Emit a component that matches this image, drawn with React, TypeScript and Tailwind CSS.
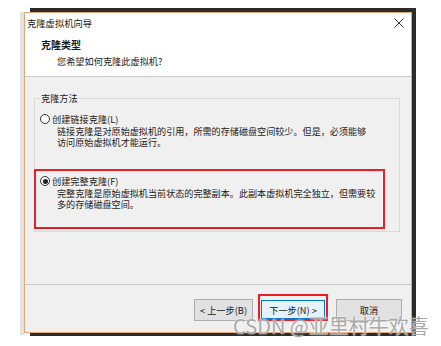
import React from 'react';

const font = "font-['Noto_Sans_CJK_SC','Noto_Sans',sans-serif]";

const Radio: React.FC<{ checked?: boolean }> = ({ checked }) => (
    <span className="w-[10px] h-[10px] rounded-full border border-[#333333] bg-white flex items-center justify-center shrink-0">
        {checked && <span className="w-[5px] h-[5px] rounded-full bg-[#222222]" />}
    </span>
);

export default function App() {
    return (
        <div className={`relative w-[441px] h-[346px] bg-white overflow-hidden text-[#1a1a1a] ${font}`}>
            {/* desktop shadow behind the window */}
            <div className="absolute left-[30px] top-[8px] w-[386px] h-[328px] bg-[#2b2b2b]" />
            <div className="absolute left-[20px] top-[12px] w-[4px] h-[323px] bg-[#e2e2e2]" />

            {/* dialog */}
            <div className="absolute left-[24px] top-[12px] w-[388px] h-[321px] border border-[#e6a574] bg-[#f0f0f0] flex flex-col">
                {/* header */}
                <div className="bg-white h-[64px] border-b border-[#c9c9c9] flex flex-col">
                    <div className="h-[19px] flex items-center justify-between pl-[2px] pr-[6px]">
                        <span className="text-[9.3px] leading-[12px]">克隆虚拟机向导</span>
                        <svg width="10" height="10" viewBox="0 0 10 10" className="mr-[1px]">
                            <path d="M0.5 0.5 L9.5 9.5 M9.5 0.5 L0.5 9.5" stroke="#333" strokeWidth="1" />
                        </svg>
                    </div>
                    <div className="mt-[7px] pl-[16px] text-[10px] leading-[12px] font-bold">克隆类型</div>
                    <div className="mt-[4px] pl-[32px] text-[9.2px] leading-[12px]">您希望如何克隆此虚拟机?</div>
                </div>

                {/* body */}
                <div className="flex-1">
                    <div className="relative mt-[21px] ml-[9px] w-[366px] h-[134px] border border-[#d9d9d9]">
                        <span className="absolute -top-[7px] left-[5px] px-[1px] bg-[#f0f0f0] text-[9.2px] leading-[12px]">克隆方法</span>

                        <div className="pt-[14px] pl-[5px]">
                            <div className="flex items-center gap-[2px] h-[12px]">
                                <Radio />
                                <span className="text-[9.2px] leading-[12px]">创建链接克隆(L)</span>
                            </div>
                            <p className="mt-[1px] pl-[17px] text-[9.1px] leading-[11px] w-[333px]">
                                链接克隆是对原始虚拟机的引用，所需的存储磁盘空间较少。但是，必须能够访问原始虚拟机才能运行。
                            </p>
                        </div>

                        <div className="mt-[21px] -ml-[1px] w-[351px] h-[60px] border-2 border-[#ee1c24]">
                            <div className="pt-[4px] pl-[4px]">
                                <div className="flex items-center gap-[2px] h-[12px]">
                                    <Radio checked />
                                    <span className="text-[9.2px] leading-[12px]">创建完整克隆(F)</span>
                                </div>
                                <p className="mt-[1px] pl-[17px] text-[9.1px] leading-[10.5px] w-[342px]">
                                    完整克隆是原始虚拟机当前状态的完整副本。此副本虚拟机完全独立，但需要较多的存储磁盘空间。
                                </p>
                            </div>
                        </div>
                    </div>
                </div>

                {/* footer */}
                <div className="h-[48px] border-t border-[#c9c9c9] flex justify-end items-start pt-[9px] pr-[9px]">
                    <button className="mt-[5px] w-[59px] h-[22px] border border-[#adadad] bg-[#e1e1e1] text-[9.2px] leading-[12px] flex items-center justify-center">
                        &lt; 上一步(B)
                    </button>
                    <div className="ml-[5px] w-[70px] h-[27px] border-2 border-[#ee1c24]">
                        <button className="mt-[4px] ml-[1px] w-[64px] h-[19px] border border-[#0078d7] bg-[#e5f1fb] text-[9.2px] leading-[12px] flex items-center justify-center">
                            下一步(N) &gt;
                        </button>
                    </div>
                    <button className="mt-[5px] ml-[8px] w-[66px] h-[22px] border border-[#adadad] bg-[#e1e1e1] text-[9.2px] leading-[12px] flex items-center justify-center">
                        取消
                    </button>
                </div>
            </div>

            {/* watermark */}
            <div className="absolute left-[233px] top-[314px] text-[20px] leading-[24px] text-[#a9a9a9] [text-shadow:0_0_2px_#ffffff] whitespace-nowrap">
                CSDN @亚里村牛欢喜
            </div>
        </div>
    );
}
